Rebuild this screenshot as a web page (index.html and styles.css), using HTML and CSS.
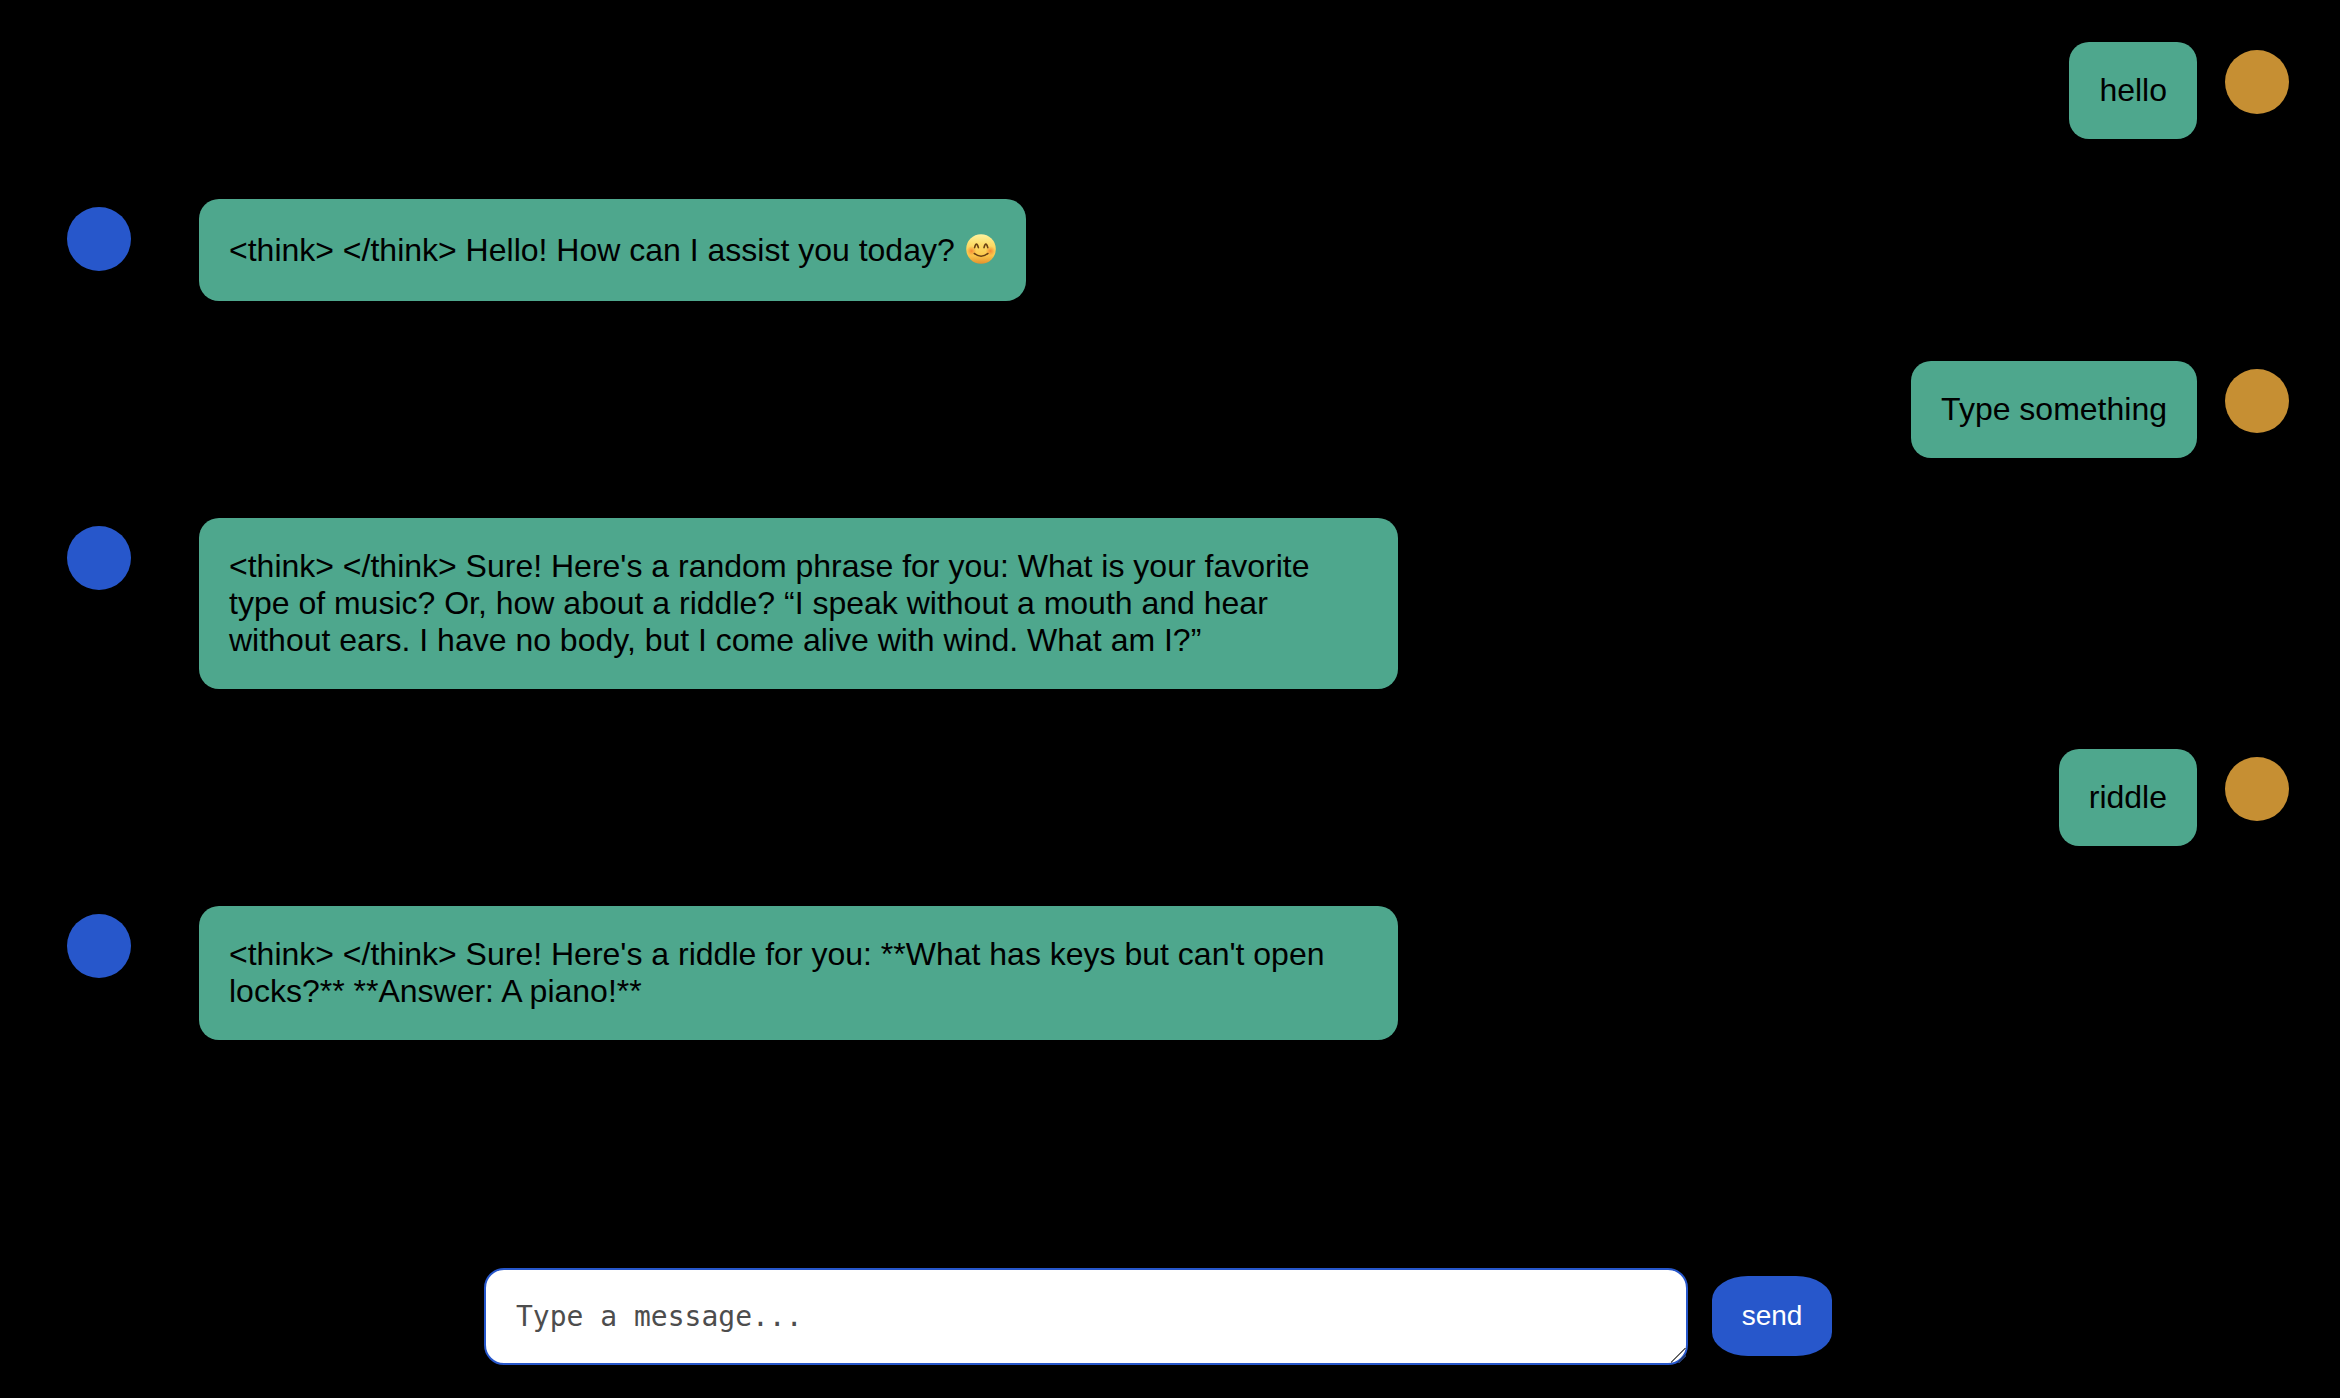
FILE: index.html
```html
<!DOCTYPE html>
<html lang="en">
<head>
  <meta charset="utf-8">
  <meta name="viewport" content="width=device-width, initial-scale=1">
  <title>Chat</title>
  <link rel="stylesheet" href="styles.css">
</head>
<body>
  <main class="chat">
    <article class="message message-user">
      <p class="bubble">hello</p>
      <span class="avatar"></span>
    </article>
    <article class="message message-bot">
      <span class="avatar"></span>
      <p class="bubble">&lt;think&gt; &lt;/think&gt; Hello! How can I assist you today? <svg class="emoji" viewBox="0 0 32 42" role="img" aria-label="Smiling face">
          <defs>
            <linearGradient id="face" x1="0" y1="0" x2="0" y2="1">
              <stop offset="0" stop-color="#fff3a0"/>
              <stop offset="0.3" stop-color="#fddf6e"/>
              <stop offset="0.7" stop-color="#fcc94c"/>
              <stop offset="1" stop-color="#e5922c"/>
            </linearGradient>
            <radialGradient id="blush">
              <stop offset="0" stop-color="#f5762a" stop-opacity="0.8"/>
              <stop offset="1" stop-color="#f5862a" stop-opacity="0"/>
            </radialGradient>
          </defs>
          <circle cx="17" cy="20" r="14.8" fill="url(#face)"/>
          <circle cx="7.5" cy="22" r="5" fill="url(#blush)"/>
          <circle cx="26.5" cy="22" r="5" fill="url(#blush)"/>
          <g fill="none" stroke="#694013" stroke-linecap="round" stroke-linejoin="round">
            <path stroke-width="1.6" d="M10.6 18.6q1.8-7 3.8 0M20 18.6q1.8-7 3.8 0"/>
            <path stroke-width="1.4" d="M10.2 24.4q6.9 5.6 13.8 0"/>
          </g>
        </svg></p>
    </article>
    <article class="message message-user">
      <p class="bubble">Type something</p>
      <span class="avatar"></span>
    </article>
    <article class="message message-bot">
      <span class="avatar"></span>
      <p class="bubble">&lt;think&gt; &lt;/think&gt; Sure! Here's a random phrase for you: What is your favorite type of music? Or, how about a riddle? “I speak without a mouth and hear without ears. I have no body, but I come alive with wind. What am I?”</p>
    </article>
    <article class="message message-user">
      <p class="bubble">riddle</p>
      <span class="avatar"></span>
    </article>
    <article class="message message-bot">
      <span class="avatar"></span>
      <p class="bubble">&lt;think&gt; &lt;/think&gt; Sure! Here's a riddle for you: **What has keys but can't open locks?** **Answer: A piano!**</p>
    </article>
  </main>
  <form class="composer">
    <textarea class="composer-input" rows="1" placeholder="Type a message..." aria-label="Message"></textarea>
    <button class="composer-send" type="button">send</button>
  </form>
</body>
</html>
```

FILE: styles.css
```css
* {
  box-sizing: border-box;
}

body {
  display: flex;
  flex-direction: column;
  min-height: 100vh;
  margin: 0;
  background: #000;
  color: #000;
  font-family: "Liberation Sans", Arial, sans-serif;
  font-size: 32px;
  line-height: 37px;
}

.chat {
  display: flex;
  flex: 1;
  flex-direction: column;
  gap: 60px;
  padding: 42px 51px 60px 67px;
}

.message {
  display: flex;
  align-items: flex-start;
}

.message-user {
  justify-content: flex-end;
  gap: 28px;
}

.message-bot {
  gap: 68px;
}

.avatar {
  flex: none;
  width: 64px;
  height: 64px;
  margin-top: 8px;
  border-radius: 50%;
}

.message-user .avatar {
  background: #c68f33;
}

.message-bot .avatar {
  background: #2757cb;
}

.bubble {
  max-width: 1199px;
  margin: 0;
  padding: 30px;
  border-radius: 20px;
  background: #4ea78d;
}

.emoji {
  width: 32px;
  height: 42px;
  vertical-align: -10px;
}

.composer {
  display: flex;
  align-items: flex-start;
  justify-content: center;
  gap: 24px;
  padding: 0 24px 33px 0;
}

.composer-input {
  flex: 0 1 1204px;
  min-width: 0;
  height: 97px;
  padding: 30px;
  border: 2px solid #2757cb;
  border-radius: 20px;
  background: #fff;
  color: #000;
  font-family: "DejaVu Sans Mono", monospace;
  font-size: 28px;
  line-height: 33px;
}

.composer-input::placeholder {
  color: #4d4d4d;
}

.composer-input::-webkit-scrollbar {
  width: 16px;
  height: 16px;
}

/* two diagonal grip strokes in the resize corner */
.composer-input::-webkit-resizer {
  background: linear-gradient(135deg, transparent 46%, #666 46% 53%, transparent 53% 70%, #223a70 70% 77%, transparent 77%);
}

.composer-send {
  flex: none;
  width: 120px;
  height: 80px;
  margin-top: 8px;
  padding: 0;
  border: 0;
  border-radius: 30%;
  background: #2757cb;
  color: #fff;
  font-family: inherit;
  font-size: 28px;
}
```
